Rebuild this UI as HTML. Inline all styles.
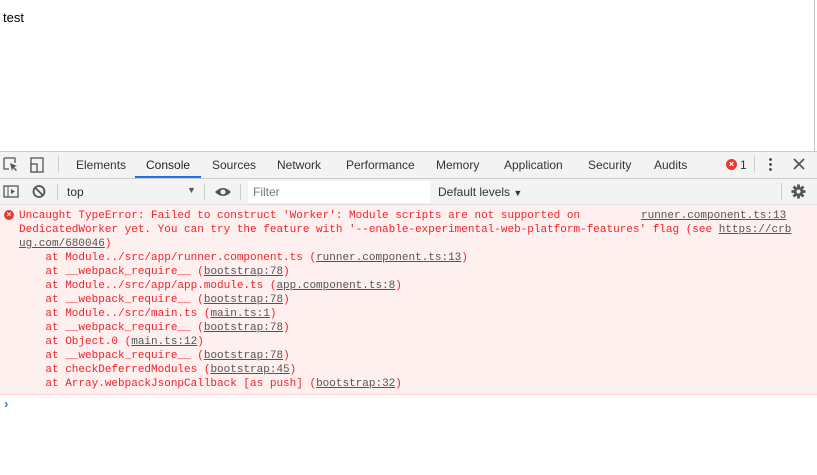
<!DOCTYPE html>
<html><head><meta charset="utf-8"><style>
*{margin:0;padding:0;box-sizing:border-box}
body{width:817px;height:475px;overflow:hidden;background:#fff;font-family:"Liberation Sans",sans-serif;position:relative}
.abs{position:absolute}
.sans{font-size:12px;color:#333}
.mono{font-family:"Liberation Mono",monospace;font-size:11px;line-height:14px;white-space:pre;color:#f0242a}
u{color:#545454;text-decoration:underline}
</style></head><body>
<div class="abs" style="left:3px;top:10px;font-size:13px;color:#000">test</div>
<div class="abs" style="left:814px;top:0;width:1px;height:151px;background:#c8c8c8"></div>
<div class="abs" style="left:0;top:151px;width:817px;height:28px;background:#f3f3f3;border-top:1px solid #ccc;border-bottom:1px solid #ccc"></div>
<svg class="abs" style="left:3px;top:157px" width="44" height="16"><path d="M1 1h11v5M1 1v11h5" fill="none" stroke="#555" stroke-width="1.3"/><path d="M7 6l7 3-3 1 3 3-1 1-3-3-1 3z" fill="#555"/><rect x="28" y="1" width="12" height="14" fill="none" stroke="#555" stroke-width="1.3"/><rect x="28" y="7" width="6" height="8" fill="#f3f3f3" stroke="#555" stroke-width="1.3"/></svg>
<div class="abs" style="left:58px;top:156px;width:1px;height:16px;background:#ccc"></div>
<div class="abs sans" style="left:76px;top:158px">Elements</div>
<div class="abs sans" style="left:146px;top:158px;color:#222">Console</div>
<div class="abs" style="left:135px;top:176px;width:66px;height:2px;background:#1a73e8"></div>
<div class="abs sans" style="left:212px;top:158px">Sources</div>
<div class="abs sans" style="left:277px;top:158px">Network</div>
<div class="abs sans" style="left:346px;top:158px">Performance</div>
<div class="abs sans" style="left:436px;top:158px">Memory</div>
<div class="abs sans" style="left:504px;top:158px">Application</div>
<div class="abs sans" style="left:588px;top:158px">Security</div>
<div class="abs sans" style="left:654px;top:158px">Audits</div>
<div class="abs" style="left:726px;top:159px;width:11px;height:11px;border-radius:50%;background:#e53935;color:#fff;font-size:9px;line-height:11px;text-align:center;font-weight:bold">×</div>
<div class="abs sans" style="left:740px;top:158px">1</div>
<div class="abs" style="left:754px;top:156px;width:1px;height:16px;background:#ccc"></div>
<div class="abs" style="left:769px;top:157px;width:3px;height:14px;background:radial-gradient(circle,#555 1.3px,transparent 1.6px) 0 0/3px 5px"></div>
<svg class="abs" style="left:793px;top:158px" width="12" height="12"><path d="M1 1l10 10M11 1L1 11" stroke="#555" stroke-width="1.8"/></svg>
<div class="abs" style="left:0;top:179px;width:817px;height:26px;background:#f3f3f3;border-bottom:1px solid #ddd"></div>
<svg class="abs" style="left:3px;top:184px" width="50" height="16"><rect x="1" y="2" width="14" height="11" fill="none" stroke="#555" stroke-width="1.3"/><path d="M5 2v11" stroke="#555"/><path d="M8 5l4 2.5-4 2.5z" fill="#555"/><circle cx="36" cy="7.5" r="5.5" fill="none" stroke="#555" stroke-width="1.8"/><path d="M32 3.5l8 8" stroke="#555" stroke-width="1.8"/></svg>
<div class="abs" style="left:57px;top:184px;width:1px;height:16px;background:#ccc"></div>
<div class="abs sans" style="left:67px;top:185px">top</div>
<div class="abs" style="left:187px;top:185px;font-size:9px;color:#555">▼</div>
<div class="abs" style="left:204px;top:184px;width:1px;height:16px;background:#ccc"></div>
<svg class="abs" style="left:214px;top:186px" width="18" height="12"><path d="M1 6Q9 -2 17 6Q9 14 1 6z" fill="#555"/><circle cx="9" cy="6" r="2.5" fill="#f3f3f3"/></svg>
<div class="abs" style="left:240px;top:184px;width:1px;height:16px;background:#ccc"></div>
<div class="abs" style="left:248px;top:181px;width:182px;height:22px;background:#fff"></div>
<div class="abs sans" style="left:253px;top:185px;color:#777">Filter</div>
<div class="abs sans" style="left:438px;top:185px">Default levels <span style="font-size:9px">▼</span></div>
<div class="abs" style="left:781px;top:183px;width:1px;height:17px;background:#ccc"></div>
<svg class="abs" style="left:791px;top:184px" width="15" height="15" viewBox="0 0 16 16"><g fill="#555"><circle cx="8" cy="8" r="5"/><rect x="6.5" y="0.5" width="3" height="15"/><rect x="0.5" y="6.5" width="15" height="3"/><rect x="6.5" y="0.5" width="3" height="15" transform="rotate(45 8 8)"/><rect x="6.5" y="0.5" width="3" height="15" transform="rotate(-45 8 8)"/></g><circle cx="8" cy="8" r="2.2" fill="#f3f3f3"/></svg>
<div class="abs" style="left:0;top:205px;width:817px;height:190px;background:#fff0f0;border-bottom:1px solid #ffd6d6"></div>
<div class="abs" style="left:4px;top:210px;width:10px;height:10px;border-radius:50%;background:#e53935;color:#fff;font-size:8px;line-height:10px;text-align:center;font-weight:bold">×</div>
<div class="abs mono" style="left:19px;top:209px">Uncaught TypeError: Failed to construct 'Worker': Module scripts are not supported on
DedicatedWorker yet. You can try the feature with '--enable-experimental-web-platform-features' flag (see <u>https://crb
ug.com/680046</u>)
    at Module../src/app/runner.component.ts (<u>runner.component.ts:13</u>)
    at __webpack_require__ (<u>bootstrap:78</u>)
    at Module../src/app/app.module.ts (<u>app.component.ts:8</u>)
    at __webpack_require__ (<u>bootstrap:78</u>)
    at Module../src/main.ts (<u>main.ts:1</u>)
    at __webpack_require__ (<u>bootstrap:78</u>)
    at Object.0 (<u>main.ts:12</u>)
    at __webpack_require__ (<u>bootstrap:78</u>)
    at checkDeferredModules (<u>bootstrap:45</u>)
    at Array.webpackJsonpCallback [as push] (<u>bootstrap:32</u>)</div>
<div class="abs mono" style="left:641px;top:209px"><u>runner.component.ts:13</u></div>
<div class="abs" style="left:4px;top:396px;font-size:13px;color:#367cf1;font-weight:bold">›</div>
</body></html>
